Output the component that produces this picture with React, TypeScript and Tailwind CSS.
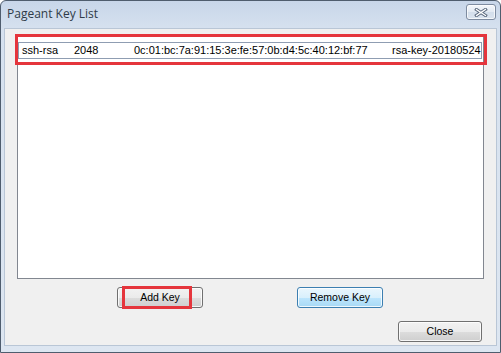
import React from "react";

const btnBase =
  "h-[21px] rounded-[3px] border text-[10.5px] leading-none text-black flex items-center justify-center shadow-[inset_0_0_0_1px_rgba(255,255,255,0.8)]";
const normalBg =
  "border-[#707070] bg-[linear-gradient(to_bottom,#f2f2f2_0%,#ebebeb_50%,#dddddd_50%,#cfcfcf_100%)]";
const blueBg =
  "border-[#3c7fb1] bg-[linear-gradient(to_bottom,#eaf6fd_0%,#d9f0fc_50%,#bee6fd_50%,#a7d9f5_100%)]";

export default function App() {
  return (
    <div
      className="w-[501px] h-[353px] bg-white"
      style={{ fontFamily: '"Liberation Sans", Arial, sans-serif' }}
    >
      <div className="relative w-full h-full flex flex-col rounded-t-[6px] border border-[#4f5d6e] bg-[linear-gradient(to_bottom,#c8d6e9_0%,#d6e1ef_8%,#dde6f1_100%)] px-[3px] pb-[6px]">
        {/* Title bar */}
        <div className="h-[27px] flex items-start justify-between">
          <span
            className="pl-[3px] pt-[5px] text-[12px] leading-[16px] text-[#2f3b48]"
            style={{ fontFamily: '"Open Sans", "Noto Sans", sans-serif' }}
          >
            Pageant Key List
          </span>
          <div className="mt-[3px] mr-[1px] w-[30px] h-[16px] rounded-[3px] border border-[#7d8ba0] bg-[linear-gradient(to_bottom,#f4f7fb_0%,#e3eaf3_50%,#d3deeb_51%,#dbe4ef_100%)] shadow-[inset_0_0_0_1px_rgba(255,255,255,0.7)] flex items-center justify-center">
            <svg width="14" height="9" viewBox="0 0 14 9">
              <path d="M2.5 1.5 L11.5 7.5 M11.5 1.5 L2.5 7.5" stroke="#56657a" strokeWidth="3.2" strokeLinecap="square" fill="none" />
              <path d="M2.5 1.5 L11.5 7.5 M11.5 1.5 L2.5 7.5" stroke="#ffffff" strokeWidth="1.3" strokeLinecap="square" fill="none" />
            </svg>
          </div>
        </div>

        {/* Client area */}
        <div className="flex-1 bg-[#f0f0f0] border border-[#b9c6d6] flex flex-col">
          {/* List box */}
          <div className="ml-[12px] mt-[6px] w-[467px] h-[244px] bg-white border border-[#828790] flex flex-col">
            <div className="mt-[6px] ml-0 w-[464px] h-[17px] border border-[#8f9db2] flex items-center text-[11px] text-black">
              <span className="pl-[3px] w-[55px]">ssh-rsa</span>
              <span className="w-[60px]">2048</span>
              <span className="w-[258px]">0c:01:bc:7a:91:15:3e:fe:57:0b:d4:5c:40:12:bf:77</span>
              <span>rsa-key-20180524</span>
            </div>
          </div>

          {/* Button row */}
          <div className="mt-[8px] flex">
            <div className={`ml-[112px] w-[86px] ${btnBase} ${normalBg}`}>Add Key</div>
            <div className={`ml-[94px] w-[86px] ${btnBase} ${blueBg}`}>Remove Key</div>
          </div>

          {/* Close row */}
          <div className="mt-[13px] flex justify-end pr-[14px]">
            <div className={`w-[84px] ${btnBase} ${normalBg}`}>Close</div>
          </div>
        </div>

        {/* Red annotation boxes */}
        <div className="absolute left-[14px] top-[33px] w-[472px] h-[31px] border-[3px] border-[#e5353c]" />
        <div className="absolute left-[121px] top-[285px] w-[70px] h-[23px] border-[3px] border-[#e5353c]" />
      </div>
    </div>
  );
}
